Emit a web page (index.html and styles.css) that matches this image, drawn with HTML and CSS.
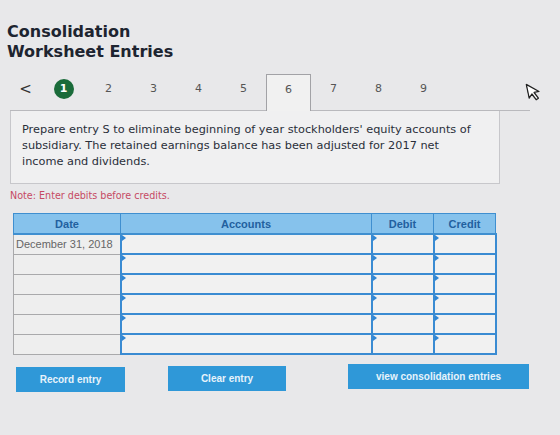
FILE: index.html
```html
<!DOCTYPE html>
<html lang="en">
<head>
	<meta charset="UTF-8">
	<title>Consolidation Worksheet Entries</title>
	<link rel="stylesheet" href="styles.css">
</head>
<body>
<!-- title -->
	<h1 class="title">Consolidation<br>Worksheet Entries</h1>
<!-- entry tabs -->
	<div class="tabs">
		<span class="prev">&lt;</span>
		<span class="tab"><b class="done">1</b></span>
		<span class="tab">2</span>
		<span class="tab">3</span>
		<span class="tab">4</span>
		<span class="tab">5</span>
		<span class="tab active">6</span>
		<span class="tab">7</span>
		<span class="tab">8</span>
		<span class="tab">9</span>
	</div>
	<div class="prompt">
		Prepare entry S to eliminate beginning of year stockholders' equity accounts of subsidiary. The retained earnings balance has been adjusted for 2017 net income and dividends.
	</div>
	<p class="note">Note: Enter debits before credits.</p>
<!-- journal grid -->
	<table class="journal">
		<tr>
			<th class="c-date">Date</th>
			<th class="c-acct">Accounts</th>
			<th class="c-num">Debit</th>
			<th class="c-num">Credit</th>
		</tr>
		<tr><td class="date">December 31, 2018</td><td class="in"></td><td class="in"></td><td class="in"></td></tr>
		<tr><td class="date"></td><td class="in"></td><td class="in"></td><td class="in"></td></tr>
		<tr><td class="date"></td><td class="in"></td><td class="in"></td><td class="in"></td></tr>
		<tr><td class="date"></td><td class="in"></td><td class="in"></td><td class="in"></td></tr>
		<tr><td class="date"></td><td class="in"></td><td class="in"></td><td class="in"></td></tr>
		<tr><td class="date"></td><td class="in"></td><td class="in"></td><td class="in"></td></tr>
	</table>
	<div class="buttons">
		<button class="btn btn-record">Record entry</button>
		<button class="btn btn-clear">Clear entry</button>
		<button class="btn btn-view">view consolidation entries</button>
	</div>
<!-- mouse pointer -->
	<svg class="pointer" width="14" height="20" viewBox="0 0 14 20">
		<path d="M1 1 L1 15 L4.5 11.5 L7.5 18 L10 17 L7 10.5 L12 10.5 Z" fill="#fff" stroke="#222" stroke-width="1.3" stroke-linejoin="round"/>
	</svg>
</body>
</html>
```

FILE: styles.css
```css
*{
	margin:0;
	padding:0;
}
body{
	background-color: #e8e8ea;
	font-family: "DejaVu Sans", Verdana, sans-serif;
	color: #333;
	position: relative;
	width: 560px;
	height: 435px;
	overflow: hidden;
}
.title{
	font-size: 16px;
	line-height: 20px;
	font-weight: bold;
	color: #1d2430;
	padding: 22px 0 0 7px;
}
/* tabs */
.tabs{
	display: flex;
	align-items: stretch;
	margin: 12px 0 0 10px;
	width: 520px;
	height: 36px;
	border-bottom: 1px solid #b9b9bd;
}
.prev{
	width: 31px;
	display: flex;
	align-items: center;
	justify-content: center;
	padding-bottom: 7px;
	font-size: 15px;
	color: #333;
}
.tab{
	width: 45px;
	display: flex;
	align-items: center;
	justify-content: center;
	padding-bottom: 7px;
	font-size: 11px;
	color: #555;
}
.tab.active{
	width: 43px;
	border: 1px solid #a2a2a6;
	border-bottom: none;
	background-color: #f1f1f1;
	margin-bottom: -1px;
	padding-bottom: 8px;
}
.done{
	width: 20px;
	height: 20px;
	line-height: 20px;
	text-align: center;
	border-radius: 50%;
	background-color: #1a6b3a;
	color: #fff;
	font-size: 11px;
}
.prompt{
	margin-left: 10px;
	width: 454px;
	height: 49px;
	padding: 11px 23px 12px 11px;
	border: 1px solid #c7c7cb;
	border-top: none;
	background-color: #f0f0f1;
	font-size: 11.3px;
	line-height: 16px;
	color: #2a2f3a;
}
.note{
	margin: 6px 0 0 10px;
	font-size: 9.6px;
	color: #c64a64;
	height: 14px;
}
/* journal grid */
.journal{
	margin: 9px 0 0 13px;
	border-collapse: collapse;
	font-family: "Liberation Sans", Arial, sans-serif;
}
.journal th{
	height: 19px;
	background-color: #86c2ec;
	color: #22609f;
	font-size: 11px;
	font-weight: bold;
	border: 1px solid #3f8fd0;
	border-bottom: 2px solid #3f8fd0;
}
.c-date{
	width: 106px;
}
.c-acct{
	width: 250px;
}
.c-num{
	width: 61px;
}
.journal td{
	height: 18px;
	padding: 0;
}
.date{
	border: 1px solid #a9a9ab;
	background-color: #eeeeee;
	color: #666;
	font-size: 11px;
	padding-left: 2px !important;
	white-space: nowrap;
}
.in{
	border: 2px solid #3a8bd2;
	background-color: #f1f1f1;
	position: relative;
}
.in:before{
	content: "";
	position: absolute;
	left: 0;
	top: 0;
	border-left: 4px solid #2f86d4;
	border-top: 3px solid transparent;
	border-bottom: 3px solid transparent;
}
/* buttons */
.buttons{
	display: flex;
	align-items: flex-start;
	margin: 10px 0 0 16px;
}
.btn{
	border: none;
	background-color: #2f98d8;
	color: #e6f3fb;
	font-family: "Liberation Sans", Arial, sans-serif;
	font-weight: bold;
	font-size: 10px;
	height: 25px;
}
.btn-record{
	width: 109px;
	margin-top: 2px;
}
.btn-clear{
	width: 118px;
	margin-left: 43px;
	margin-top: 1px;
}
.btn-view{
	width: 181px;
	margin-left: 62px;
	margin-top: -1px;
}
.pointer{
	position: absolute;
	left: 527px;
	top: 82px;
	transform: rotate(-12deg);
}
```
